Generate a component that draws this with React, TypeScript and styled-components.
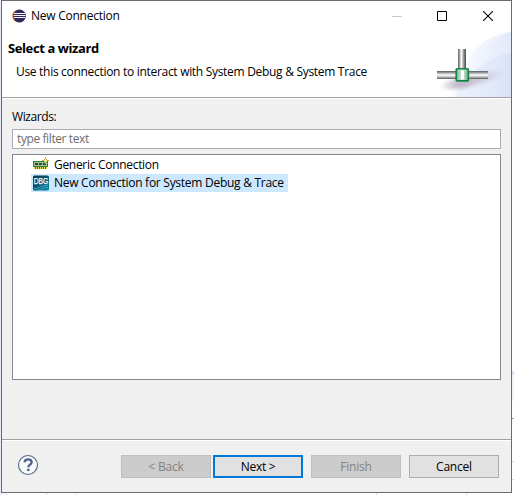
import React from 'react';
import styled, { createGlobalStyle } from 'styled-components';

const Global = createGlobalStyle`
  * { box-sizing: border-box; }
  body { margin: 0; background: #fff; overflow: hidden; }
  button, input { font: inherit; }
`;

const Desktop = styled.div`
  width: 514px;
  height: 495px;
  padding-left: 1px;
  font: 12px/18px "Open Sans", "Noto Sans", sans-serif;
  color: #000;
  background:
    linear-gradient(#dcdff5, #dcdff5) 512px 371px / 2px 4px no-repeat,
    linear-gradient(#f3f3fb, #f3f3fb) 512px 375px / 2px 26px no-repeat,
    linear-gradient(#a0a0a0, #a0a0a0) 512px 418px / 2px 1px no-repeat,
    linear-gradient(#dcdcdc, #dcdcdc) 512px 461px / 2px 1px no-repeat,
    linear-gradient(#dcdcdc, #dcdcdc) 512px 479px / 2px 1px no-repeat,
    linear-gradient(#dcdcdc, #dcdcdc) 46px 493px / 1px 2px no-repeat,
    linear-gradient(#dcdcdc, #dcdcdc) 76px 493px / 1px 2px no-repeat,
    linear-gradient(#dcdcdc, #dcdcdc) 376px 493px / 1px 2px no-repeat,
    linear-gradient(#dcdcdc, #dcdcdc) 466px 493px / 1px 2px no-repeat,
    linear-gradient(#e9ebf9, #e9ebf9) 0 0 / 1px 495px no-repeat,
    linear-gradient(#f0f1fa, #f0f1fa) 0 493px / 7px 2px no-repeat,
    #fff;
`;

const Dialog = styled.div`
  display: flex;
  flex-direction: column;
  width: 511px;
  height: 493px;
  border: 1px solid #6b6b6f;
  border-left-color: #62657c;
  background: #f0f0f0;
`;

const Top = styled.header`
  position: relative;
  height: 98px;
  flex: none;
  background: #fff;
  border-bottom: 1px solid #fff;
  box-shadow: inset 0 -1px #a0a0a0;
`;

const Banner = styled.svg`
  position: absolute;
  right: 0;
  bottom: 1px;
`;

const TitleBar = styled.div`
  position: relative;
  display: flex;
  align-items: center;
  height: 29px;
  padding-left: 10px;
  gap: 5px;
`;

const Label = styled.span<{ $track?: number; $bold?: boolean }>`
  display: block;
  white-space: pre;
  letter-spacing: ${p => p.$track ?? 0}px;
  font-size: ${p => (p.$bold ? 13 : 12)}px;
  font-weight: ${p => (p.$bold ? 700 : 400)};
`;

const Controls = styled.div`
  display: flex;
  margin-left: auto;
`;

const ControlButton = styled.button`
  display: grid;
  place-items: center;
  width: 46px;
  height: 29px;
  padding: 0;
  border: 0;
  background: none;
`;

const Heading = styled.div`
  position: relative;
  padding: 9px 0 0 6px;
`;

const Description = styled.div`
  padding: 6px 0 0 8px;
`;

const Content = styled.main`
  display: flex;
  flex-direction: column;
  flex: 1;
  padding: 9px 10px 0;
`;

const Filter = styled.input`
  width: 489px;
  height: 20px;
  margin-top: 3px;
  padding: 0 4px 1px;
  border: 1px solid #abadb3;
  background: #fff;
  letter-spacing: -0.4px;
  outline: none;
  &::placeholder { color: #6d6d6d; opacity: 1; }
`;

const Tree = styled.div`
  display: flex;
  flex-direction: column;
  align-items: flex-start;
  width: 489px;
  height: 226px;
  margin-top: 5px;
  padding: 1px 0 0 18px;
  border: 1px solid #828790;
  background: #fff;
`;

const Item = styled.div<{ $selected?: boolean }>`
  display: flex;
  align-items: center;
  gap: 5px;
  height: 18px;
  padding: 0 4px 0 2px;
  background: ${p => (p.$selected ? '#cce8ff' : 'transparent')};
`;

const Footer = styled.footer`
  display: flex;
  align-items: flex-start;
  height: 53px;
  padding: 14px 12px 0 15px;
  border-top: 1px solid #a0a0a0;
  box-shadow: inset 0 1px #fff;
`;

const Actions = styled.div`
  display: flex;
  gap: 8px;
  margin: 1px 0 0 auto;
`;

const Pair = styled.div`
  display: flex;
  gap: 2px;
`;

const PushButton = styled.button<{ $primary?: boolean }>`
  display: flex;
  align-items: center;
  justify-content: center;
  width: 90px;
  height: 23px;
  padding: 0;
  border: ${p => (p.$primary ? '2px solid #0078d7' : '1px solid #adadad')};
  border-radius: 0;
  background: #e1e1e1;
  color: #000;
  &:disabled { background: #ccc; border-color: #bfbfbf; color: #838383; }
`;

const EclipseIcon = () => (
  <svg width="14" height="14" viewBox="0 0 14 14">
    <circle cx="6.4" cy="7" r="6.3" fill="#f0932a" />
    <circle cx="7.500" cy="7" r="6.400" fill="#30275e" />
    <path d="M2 4.500h11M1.600 6.500h12M2 8.500h11" stroke="#f4f3fb" strokeWidth="1" />
  </svg>
);

const BannerArt = () => (
  <Banner width="114" height="95" viewBox="397 2 114 95">
    <defs>
      <linearGradient id="sky" x1="0" x2="1"><stop offset="0" stopColor="#f8faff" /><stop offset="1" stopColor="#e2e9f9" /></linearGradient>
      <linearGradient id="sky2" x1="0" x2="1"><stop offset="0" stopColor="#eef2fd" /><stop offset="1" stopColor="#dae3f7" /></linearGradient>
      <linearGradient id="pipeH" x1="0" x2="0" y1="0" y2="1"><stop offset="0" stopColor="#555d5c" /><stop offset=".22" stopColor="#9da1a1" /><stop offset=".5" stopColor="#fff" /><stop offset=".75" stopColor="#bcbcbc" /><stop offset="1" stopColor="#515a58" /></linearGradient>
      <linearGradient id="pipeV"><stop offset="0" stopColor="#666" /><stop offset=".15" stopColor="#909090" /><stop offset=".42" stopColor="#fff" /><stop offset=".7" stopColor="#999" /><stop offset="1" stopColor="#3f4a48" /></linearGradient>
      <linearGradient id="joint"><stop offset="0" stopColor="#6fae8b" /><stop offset=".5" stopColor="#e4f3e9" /><stop offset="1" stopColor="#63a881" /></linearGradient>
      <radialGradient id="shade"><stop offset="0" stopColor="#a79dad" stopOpacity=".6" /><stop offset=".5" stopColor="#b9b0c2" stopOpacity=".4" /><stop offset="1" stopColor="#d9d5e4" stopOpacity="0" /></radialGradient>
    </defs>
    <path d="M512 31C484 36 464 52 450 97H512Z" fill="url(#sky)" opacity=".75" />
    <path d="M512 31C493 39 481 50 472 64L460 97H512Z" fill="url(#sky)" />
    <path d="M512 52C489 57 472 68 454 97H512Z" fill="url(#sky2)" />
    <ellipse cx="472" cy="80" rx="36" ry="9" fill="url(#shade)" transform="rotate(-13 472 80)" />
    <ellipse cx="460" cy="84" rx="20" ry="8" fill="url(#shade)" transform="rotate(-8 460 84)" />
    <rect x="458" y="49" width="8" height="20" fill="url(#pipeV)" />
    <rect x="437" y="71" width="51" height="8" fill="url(#pipeH)" />
    <rect x="456.200" y="68.700" width="12.200" height="12.200" rx=".8" fill="url(#joint)" stroke="#168447" strokeWidth="1.6" />
    <rect x="461" y="71" width="3" height="8" fill="#fff" />
  </Banner>
);

const BoardIcon = () => (
  <svg width="16" height="16" viewBox="0 0 16 16" shapeRendering="crispEdges">
    <path d="M0 4h15v6h-1v2H1v-2H0z" fill="#347b43" />
    <path d="M1 5h13v4H1z" fill="#9fc392" />
    <path d="M2 6h3v2H2zM6 6h3v2H6zM10 6h3v2h-3z" fill="#254a3b" />
    <path d="M1 10h1v2H1zM3 10h1v2H3zM5 10h1v2H5zM7 10h1v2H7zM9 10h1v2H9zM11 10h1v2h-1zM13 10h1v2h-1z" fill="#e0d45c" />
    <path d="M12 0h1v2h1v1h2v1h-2v1h-1v2h-1V5h-1V4H9V3h2V2h1z" fill="#c8a13b" />
    <path d="M12 2h1v1h1v1h-1v1h-1V4h-1V3h1z" fill="#fff4a4" />
  </svg>
);

const DebugIcon = () => (
  <svg width="16" height="16" viewBox="0 0 16 16" overflow="visible">
    <defs><linearGradient id="dbg" x1="0" x2="1" y1="0" y2="1"><stop offset="0" stopColor="#12314b" /><stop offset=".6" stopColor="#08627f" /><stop offset="1" stopColor="#0b86a6" /></linearGradient></defs>
    <rect y=".5" width="16" height="15" rx="1.500" fill="url(#dbg)" />
    <path d="M1 13.500C5 14 7 10.500 15 10.500M4 15C8 15 9 12.500 15 12.500" fill="none" stroke="#4bb7d0" strokeWidth=".8" />
    <text x="8" y="9" textAnchor="middle" textLength="14.500" lengthAdjust="spacingAndGlyphs" fontFamily="Liberation Sans" fontSize="9" fill="#fff" stroke="#fff" strokeWidth=".25">DBG</text>
  </svg>
);

const HelpIcon = () => (
  <svg width="22" height="22" viewBox="0 0 22 22">
    <circle cx="11" cy="11" r="9.500" fill="#f8f9fb" stroke="#536584" strokeWidth="1.100" />
    <path d="M7.600 8.300C7.700 6.300 9 5.300 11 5.300c2.200 0 3.600 1.100 3.600 2.900 0 2.400-3.300 2.400-3.300 5" fill="none" stroke="#4c6185" strokeWidth="2.300" />
    <rect x="10" y="14.700" width="2.600" height="2.300" rx=".4" fill="#4c6185" />
  </svg>
);

export default function App() {
  return (
    <Desktop>
      <Global />
      <Dialog>
        <Top>
          <BannerArt />
          <TitleBar>
            <EclipseIcon />
            <Label $track={-0.25}>New Connection</Label>
            <Controls>
              <ControlButton aria-label="Minimize"><svg width="12" height="10"><path d="M2 5.500h10" stroke="#c8c8c8" /></svg></ControlButton>
              <ControlButton aria-label="Maximize"><svg width="10" height="10"><path d="M.5.5h9v9h-9z" fill="none" stroke="#000" /></svg></ControlButton>
              <ControlButton aria-label="Close"><svg width="10" height="10"><path d="M0 0l10 10M10 0L0 10" stroke="#000" strokeWidth="1.100" /></svg></ControlButton>
            </Controls>
          </TitleBar>
          <Heading>
            <Label $bold $track={-0.4}>Select a wizard</Label>
            <Description><Label $track={-0.3}>Use this connection to interact with System Debug &amp; System Trace</Label></Description>
          </Heading>
        </Top>
        <Content>
          <Label $track={-0.4}>Wizards:</Label>
          <Filter placeholder="type filter text" />
          <Tree>
            <Item><BoardIcon /><Label $track={-0.3}>Generic Connection</Label></Item>
            <Item $selected><DebugIcon /><Label $track={-0.27}>New Connection for System Debug &amp; Trace</Label></Item>
          </Tree>
        </Content>
        <Footer>
          <HelpIcon />
          <Actions>
            <Pair>
              <PushButton disabled><Label $track={-0.2}>&lt; Back</Label></PushButton>
              <PushButton $primary><Label $track={-0.3}>Next &gt;</Label></PushButton>
            </Pair>
            <PushButton disabled><Label $track={-0.2}>Finish</Label></PushButton>
            <PushButton><Label $track={-0.2}>Cancel</Label></PushButton>
          </Actions>
        </Footer>
      </Dialog>
    </Desktop>
  );
}
